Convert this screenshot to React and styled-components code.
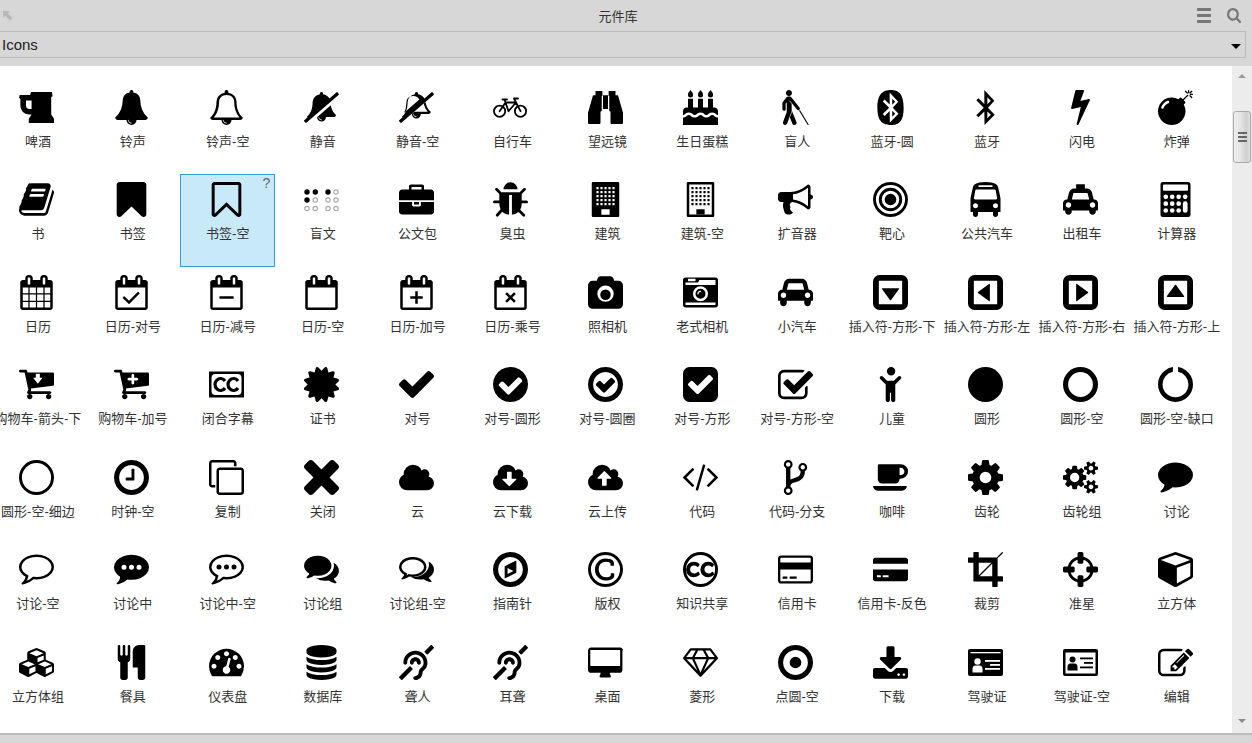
import React, { useLayoutEffect, useRef } from "react";
import styled, { createGlobalStyle } from "styled-components";
import { FaBlind, FaBluetooth, FaBluetoothB, FaDeaf } from "react-icons/fa";

const Global = createGlobalStyle`
  html, body { margin: 0; padding: 0; background: #d7d7d7; }
`;

const Page = styled.div`
  width: 1252px; height: 743px; overflow: hidden; background: #d7d7d7;
  display: flex; flex-direction: column;
  font-family: "Liberation Sans", "Noto Sans CJK SC", sans-serif; color: #333;
`;
const TitleBar = styled.div`
  height: 31px; display: flex; align-items: center; flex: none; padding: 0 11px 0 3px; box-sizing: border-box;
`;
const BackIcon = styled.svg`width: 10px; height: 10px; fill: #b8b8b8; flex: none;`;
const Title = styled.div`flex: 1; text-align: center; font-size: 13px; color: #333; padding-left: 42px;`;
const ToolIcon = styled.svg`width: 14px; height: 15px; fill: #777; margin-left: 16px; flex: none;`;
const SelectBar = styled.div`
  height: 27px; width: 1246px; box-sizing: border-box; flex: none;
  border: 1px solid #bbb; border-left: 0;
  display: flex; align-items: center; justify-content: space-between; padding: 0 4px 0 2px;
  font-size: 15px; color: #222;
`;
const Caret = styled.span`
  width: 0; height: 0; border-left: 5px solid transparent; border-right: 5px solid transparent;
  border-top: 5px solid #000; margin-top: 3px;
`;
const Main = styled.div`
  margin-top: 8px; height: 667px; flex: none; display: flex; background: #fff; overflow: hidden;
`;
const Scroller = styled.div`flex: 1; min-width: 0; overflow: hidden;`;
const Grid = styled.div`
  display: grid; grid-template-columns: repeat(13, 94.92px); grid-auto-rows: 92.6px;
  margin-left: -9.5px; padding-top: 15.5px;
`;
const Cell = styled.div`
  position: relative; display: flex; flex-direction: column; align-items: center; padding-top: 8px;
  box-sizing: border-box;
  background: ${p => (p.$selected ? "#c8e9f8" : "transparent")};
  box-shadow: ${p => (p.$selected ? "inset 0 0 0 1px #2f9fcb" : "none")};
`;
const IconBox = styled.div`
  width: 35px; height: 35px; margin-right: 3px; flex: none; display: flex;
  svg { width: 35px; height: 35px; display: block; fill: #000; }
`;
const Label = styled.div`
  margin-top: 8px; font-size: 13px; line-height: 17px; white-space: nowrap; color: #333; text-align: center;
`;
const Hint = styled.span`position: absolute; top: 0; right: 5px; font-size: 14px; line-height: 18px; color: #666;`;
const ScrollTrack = styled.div`
  width: 20px; flex: none; background: #ececec; box-sizing: border-box; padding: 8px 1px 10px;
  display: flex; flex-direction: column; align-items: center;
`;
const ArrowUp = styled.span`
  width: 0; height: 0; border-left: 4px solid transparent; border-right: 4px solid transparent; border-bottom: 4px solid #9a9a9a;
`;
const ArrowDown = styled.span`
  width: 0; height: 0; margin-top: auto; border-left: 4px solid transparent; border-right: 4px solid transparent; border-top: 4px solid #8c8c8c;
`;
const Thumb = styled.div`
  margin-top: 33px; width: 18px; height: 52px; box-sizing: border-box; border: 1px solid #a9a9a9; border-radius: 3px;
  background: linear-gradient(90deg, #eee, #e2e2e2 45%, #cfcfcf 80%, #e0e0e0);
  display: flex; flex-direction: column; justify-content: center; align-items: center; gap: 2px;
`;
const Grip = styled.span`width: 9px; height: 2px; background: #666;`;
const Footer = styled.div`flex: 1; border-top: 2px solid #bbb; background: #d7d7d7;`;

/* ---------- geometry helpers ---------- */
const disc = (cx, cy, r, cw = true) => {
  const s = cw ? 1 : 0;
  return `M${cx} ${cy - r}a${r} ${r} 0 1 ${s} 0 ${2 * r}a${r} ${r} 0 1 ${s} 0 ${-2 * r}z`;
};
const box = (x, y, w, h) => `M${x} ${y}h${w}v${h}h${-w}z`;
const boxCcw = (x, y, w, h) => `M${x} ${y}v${h}h${w}v${-h}z`;
const rbox = (x, y, w, h, r) =>
  `M${x + r} ${y}h${w - 2 * r}a${r} ${r} 0 0 1 ${r} ${r}v${h - 2 * r}a${r} ${r} 0 0 1 ${-r} ${r}h${-(w - 2 * r)}a${r} ${r} 0 0 1 ${-r} ${-r}v${-(h - 2 * r)}a${r} ${r} 0 0 1 ${r} ${-r}z`;

const windows = (draw) => {
  let d = "";
  for (let r = 0; r < 5; r++) for (let c = 0; c < 5; c++) d += draw(367 + c * 205, 256 + r * 205, 110, 110);
  return d;
};
const buildingD = rbox(128, 0, 1408, 1792, 64) + windows(boxCcw) + boxCcw(620, 1400, 424, 280);
const buildingOD = rbox(128, 0, 1408, 1792, 64) + boxCcw(256, 128, 1152, 1536);
const buildingOInner = windows(box) + box(620, 1390, 424, 280);

const calcD = (() => {
  let d = rbox(0, 0, 1536, 1792, 128) + rbox(128, 128, 1280, 320, 48);
  const rows = [760, 1110, 1460];
  const cols = [270, 600, 930];
  rows.forEach(y => cols.forEach(x => { d += disc(x, y, 120); }));
  d += disc(1265, 760, 120) + rbox(1145, 990, 240, 590, 120);
  return d;
})();

const calO = "M192 1664h1408v-1024h-1408v1024zm384-1216v-288q0-14-9-23t-23-9h-64q-14 0-23 9t-9 23v288q0 14 9 23t23 9h64q14 0 23-9t9-23zm768 0v-288q0-14-9-23t-23-9h-64q-14 0-23 9t-9 23v288q0 14 9 23t23 9h64q14 0 23-9t9-23zm384-64v1280q0 52-38 90t-90 38h-1408q-52 0-90-38t-38-90v-1280q0-52 38-90t90-38h128v-96q0-66 47-113t113-47h64q66 0 113 47t47 113v96h384v-96q0-66 47-113t113-47h64q66 0 113 47t47 113v96h128q52 0 90 38t38 90z";
const cal = "M192 1664h288v-288h-288v288zm352 0h320v-288h-320v288zm-352-352h288v-320h-288v320zm352 0h320v-320h-320v320zm-352-384h288v-288h-288v288zm736 736h320v-288h-320v288zm-384-736h320v-288h-320v288zm768 736h288v-288h-288v288zm-384-352h320v-320h-320v320zm-352-864v-288q0-13-9.500-22.500t-22.500-9.500h-64q-13 0-22.500 9.500t-9.500 22.500v288q0 13 9.500 22.500t22.500 9.500h64q13 0 22.500-9.500t9.500-22.500zm736 864h288v-320h-288v320zm-384-384h320v-288h-320v288zm384 0h288v-288h-288v288zm32-480v-288q0-13-9.500-22.500t-22.500-9.500h-64q-13 0-22.500 9.500t-9.500 22.500v288q0 13 9.500 22.500t22.500 9.500h64q13 0 22.500-9.500t9.500-22.500zm384-64v1280q0 52-38 90t-90 38h-1408q-52 0-90-38t-38-90v-1280q0-52 38-90t90-38h128v-96q0-66 47-113t113-47h64q66 0 113 47t47 113v96h384v-96q0-66 47-113t113-47h64q66 0 113 47t47 113v96h128q52 0 90 38t38 90z";

const caretFrame = rbox(0, 0, 1536, 1536, 288) + boxCcw(256, 256, 1024, 1024);
const caretTri = "M416 576h704q48 0 24 40l-352 480q-24 32-48 0l-352-480q-24-40 24-40z";

const cartBody = "M704 1536q0 53-37.500 90.500t-90.500 37.500-90.500-37.500-37.500-90.500 37.500-90.500 90.500-37.500 90.500 37.500 37.500 90.500zm896 0q0 53-37.500 90.500t-90.500 37.500-90.500-37.500-37.500-90.500 37.500-90.500 90.500-37.500 90.500 37.500 37.500 90.500zm128-1088v512q0 24-16 42.500t-41 21.500l-1044 122q1 7 4.500 21.500t6 26.500 2.500 22q0 16-24 64h920q26 0 45 19t19 45-19 45-45 19h-1024q-26 0-45-19t-19-45q0-14 11-39.500t29.500-59.500 20.500-38l-177-823h-204q-26 0-45-19t-19-45 19-45 45-19h256q16 0 28.500 6.500t20 15.500 13 24.500 7.500 26.500 5.500 29.500 4.500 25.500h1201q26 0 45 19t19 45z";

const commentO = "M896 384q-204 0-381.500 69.500t-282 187.500-104.500 255q0 112 71.500 213.500t201.500 175.500l87 50-27 96q-24 91-70 172 152-63 275-171l43-38 57 6q69 8 130 8 204 0 381.500-69.500t282-187.500 104.500-255-104.500-255-282-187.500-381.500-69.500zm896 512q0 174-120 321.500t-326 233-450 85.500q-70 0-145-8-198 175-460 242-49 14-114 22h-5q-15 0-27-10.500t-16-27.500v-1q-3-4-.5-12t2-10 4.500-9.500l6-9 7-8.500 8-9q7-8 31-34.500t34.500-38 31-39.500 32.500-51 27-59 26-76q-157-89-247.500-220t-90.500-281q0-174 120-321.500t326-233 450-85.500 450 85.500 326 233 120 321.500z";
const threeDots = disc(512, 896, 128) + disc(896, 896, 128) + disc(1280, 896, 128);
const ringCut = "M1312 896q0-148-73-273t-198-198-273-73-273 73-198 198-73 273 73 273 198 198 273 73 273-73 198-198 73-273zm224 0q0 209-103 385.500t-279.500 279.500-385.500 103-385.500-103-279.500-279.500-103-385.500 103-385.500 279.500-279.500 385.500-103 385.500 103 279.500 279.500 103 385.500z";

const path = (...ds) => ds.map((d, i) => <path key={i} d={d} />);

const idCardSolid = (
  <>
    <rect x="0" y="4" width="35" height="27" rx="2" fill="#000" />
    <rect x="2.500" y="7" width="30" height="1.300" fill="#fff" />
    <circle cx="9.500" cy="16.500" r="3.200" fill="#fff" />
    <path d="M4.500 27.500v-3.500q0-3.500 3-3.500h4q3 0 3 3.500v3.500z" fill="#fff" />
    <rect x="17" y="15" width="15" height="1.800" fill="#fff" />
    <rect x="22" y="19" width="10" height="1.800" fill="#fff" />
    <rect x="17" y="23" width="15" height="1.800" fill="#fff" />
  </>
);
const idCardLine = (
  <>
    <rect x="0" y="4" width="35" height="27" rx="2" fill="#000" />
    <rect x="2.500" y="7.500" width="30" height="21" fill="#fff" />
    <circle cx="9.500" cy="14.500" r="3" fill="#000" />
    <path d="M4.500 25.500v-3.500q0-3.500 3-3.500h4q3 0 3 3.500v3.500z" fill="#000" />
    <rect x="17" y="12.500" width="13" height="1.800" fill="#000" />
    <rect x="21" y="17" width="9" height="1.800" fill="#000" />
    <rect x="17" y="21.500" width="13" height="1.800" fill="#000" />
  </>
);
const brailleOn = [[3, 10], [11.3, 10], [24, 10], [3, 18]];
const brailleOff = [[32, 10], [11.3, 18], [24, 18], [32, 18], [3, 26.5], [11.3, 26.5], [24, 26.5], [32, 26.5]];
const braille = (
  <>
    {brailleOn.map(([x, y], i) => <circle key={i} cx={x} cy={y} r="2.700" fill="#000" />)}
    {brailleOff.map(([x, y], i) => <circle key={i} cx={x} cy={y} r="2.200" fill="none" stroke="#aaa" strokeWidth="1.200" />)}
  </>
);
const bike = (
  <g fill="none" stroke="#000" strokeWidth="1.800" strokeLinejoin="round" strokeLinecap="round">
    <circle cx="6.600" cy="21.200" r="5.600" />
    <circle cx="27.500" cy="21.200" r="5.600" />
    <path d="M6.600 21.200L12.500 12.500L23 12.500L27.500 21.200M15.500 21.200L11.500 9.500M15.500 21.200L23 12.500M9.500 9.500h4.500M23 12.500L21 8.500h4" />
  </g>
);
const closedCaption = (
  <>
    <rect x="0" y="4.500" width="35" height="26" fill="#000" />
    <rect x="2.500" y="7" width="30" height="21" rx="4" fill="#fff" />
    <g fill="none" stroke="#000" strokeWidth="3.200">
      <path d="M16 14a5.500 6 0 1 0 0 7" />
      <path d="M29 14a5.500 6 0 1 0 0 7" />
    </g>
  </>
);

const ROWS = [
  [
    { label: "啤酒", d: ["M640 832v-384h-256v256q0 53 37.500 90.500t90.500 37.500h128zm1024 448v192h-1152v-192l128-192h-128q-159 0-271.500-112.500t-112.500-271.500v-320l-64-64 32-128h480l32-128h960l32 192-64 32v800z"] },
    { label: "铃声", d: ["M912 1696q0-16-16-16-59 0-101.500-42.500t-42.500-101.500q0-16-16-16t-16 16q0 73 51.500 124.500t124.500 51.500q16 0 16-16zm816-288q0 52-38 90t-90 38h-448q0 106-75 181t-181 75-181-75-75-181h-448q-52 0-90-38t-38-90q190-161 287-397.500t97-498.500q0-165 96-262t264-117q-8-18-8-37 0-40 28-68t68-28 68 28 28 68q0 19-8 37 168 20 264 117t96 262q0 262 97 498.500t287 397.500z"] },
    { label: "铃声-空", d: ["M912 1696q0-16-16-16-59 0-101.500-42.500t-42.500-101.500q0-16-16-16t-16 16q0 73 51.500 124.500t124.500 51.500q16 0 16-16zm-678-288h1324q-271-305-271-832 0-51-24-105t-69-103-121.500-80.500-169.500-31.500-169.500 31.500-121.500 80.500-69 103-24 105q0 527-271 832zm1494 0q0 52-38 90t-90 38h-448q0 106-75 181t-181 75-181-75-75-181h-448q-52 0-90-38t-38-90q50-42 91-88t85-119.500 74.500-158.500 50-206 19.500-260q0-152 117-282.500t307-158.500q-8-19-8-39 0-40 28-68t68-28 68 28 28 68q0 20-8 39 190 28 307 158.500t117 282.500q0 139 19.500 260t50 206 74.500 158.500 85 119.500 91 88z"] },
    { label: "静音", d: ["M1558 852q61 356 298 556 0 52-38 90t-90 38h-448q0 106-75 181t-181 75-180.500-74.500-75.500-180.500zm-534 860q16 0 16-16t-16-16q-59 0-101.500-42.500t-42.500-101.500q0-16-16-16t-16 16q0 73 51.500 124.500t124.500 51.500zm1001-1512q8 10 7.500 23.500t-10.500 22.500l-1872 1622q-10 8-23.500 7t-21.500-11l-84-96q-8-10-7.500-23.500t10.500-21.500l186-161q-19-32-19-66 50-42 91-88t85-119.500 74.500-158.500 50-206 19.500-260q0-152 117-282.500t307-158.500q-8-19-8-39 0-40 28-68t68-28 68 28 28 68q0 20-8 39 124 18 219 82.500t148 157.500l418-363q10-8 23.500-7t21.500 11z"] },
    { label: "静音-空", d: ["M1032 1696q0-16-16-16-59 0-101.500-42.500t-42.500-101.500q0-16-16-16t-16 16q0 73 51.500 124.500t124.500 51.500q16 0 16-16zm-721-229l877-760q-42-88-132.500-146.500t-223.500-58.500q-93 0-169.500 31.500t-121.500 80.500-69 103-24 105q0 384-137 645zm1537-59q0 52-38 90t-90 38h-448q0 106-75 181t-181 75-180.500-74.500-75.500-180.500l149-129h757q-166-187-227-459l111-97q61 356 298 556zm94-1124l84 96q8 10 7.500 23.500t-10.500 22.500l-1872 1622q-10 8-23.500 7t-21.500-11l-84-96q-8-10-7.500-23.500t10.500-21.500l186-161q-19-32-19-66 50-42 91-88t85-119.500 74.500-158.500 50-206 19.500-260q0-152 117-282.500t307-158.500q-8-19-8-39 0-40 28-68t68-28 68 28 28 68q0 20-8 39 124 18 219 82.500t148 157.500l418-363q10-8 23.500-7t21.500 11z"] },
    { label: "自行车", fixed: bike },
    { label: "望远镜", d: ["M704 320v768q0 26-19 45t-45 19v576q0 26-19 45t-45 19h-512q-26 0-45-19t-19-45v-512l249-873q7-23 31-23h424zm320 0v704h-256v-704h256zm768 896v512q0 26-19 45t-45 19h-512q-26 0-45-19t-19-45v-576q-26 0-45-19t-19-45v-768h424q24 0 31 23zm-1056-1088v224h-352v-224q0-14 9-23t23-9h288q14 0 23 9t9 23zm672 0v224h-352v-224q0-14 9-23t23-9h288q14 0 23 9t9 23z"] },
    { label: "生日蛋糕", d: ["M1792 1408v384h-1792v-384q45 0 85-14t59-27.500 47-37.500q30-27 51.500-38t56.500-11q24 0 44 7t31 15 33 27q29 25 47 38t58 27 86 14q45 0 85-14.500t58-27 48-37.500q21-19 32.500-27t31-15 43.500-7q35 0 56.500 11t51.500 38q28 24 47 37.500t59 27.500 85 14 85-14 59-27.500 47-37.500q30-27 51.500-38t56.500-11q34 0 55.500 11t51.500 38q29 25 47 38t58 27 86 14zm0-320v192q-24 0-44-7t-31-15-33-27q-29-25-47-38t-58-27-85-14q-46 0-86 14t-58 27-47 38q-22 19-33 27t-31 15-44 7q-35 0-56.500-11t-51.500-38q-29-25-47-38t-58-27-86-14q-45 0-85 14.500t-58 27-48 37.500q-21 19-32.500 27t-31 15-43.500 7q-35 0-56.500-11t-51.500-38q-28-24-47-37.500t-59-27.500-85-14q-46 0-86 14t-58 27-47 38q-30 27-51.500 38t-56.500 11v-192q0-80 56-136t136-56h64v-448h256v448h256v-448h256v448h256v-448h256v448h64q80 0 136 56t56 136z", "M384 0q128 128 128 256t-128 128-128-128 128-256z", "M896 0q128 128 128 256t-128 128-128-128 128-256z", "M1408 0q128 128 128 256t-128 128-128-128 128-256z"] },
    { label: "盲人", Comp: FaBlind },
    { label: "蓝牙-圆", Comp: FaBluetooth },
    { label: "蓝牙", Comp: FaBluetoothB },
    { label: "闪电", d: ["M1333 566q18 20 7 44l-540 1157q-13 25-42 25-4 0-14-2-17-5-25.500-19t-4.500-30l197-808-406 101q-4 1-12 1-18 0-31-11-18-15-13-39l201-825q4-14 16-23t28-9h328q19 0 32 12.500t13 29.500q0 8-5 18l-171 463 396-98q8-2 12-2 19 0 34 15z"] },
    { label: "炸弹", d: ["M571 589q-10-25-34-35t-49 0q-108 44-191 127t-127 191q-10 25 0 49t35 34q13 5 24 5 42 0 60-40 34-84 98.500-148.500t148.500-98.500q25-11 35-35t0-49zm942-356l46 46-244 243 68 68q19 19 19 45.500t-19 45.500l-64 64q89 161 89 343 0 143-55.500 273.500t-150 225-225 150-273.500 55.500-273.500-55.500-225-150-150-225-55.500-273.500 55.500-273.500 150-225 225-150 273.500-55.500q182 0 343 89l64-64q19-19 45.500-19t45.500 19l68 68zm8-56q-10 10-22 10-13 0-23-10l-91-90q-9-10-9-23t9-23q10-9 23-9t23 9l90 91q10 9 10 22.500t-10 22.500zm230 230q-11 9-23 9t-23-9l-90-91q-10-9-10-22.500t10-22.500q9-10 22.500-10t22.500 10l91 90q9 10 9 23t-9 23zm41-183q0 14-9 23t-23 9h-96q-14 0-23-9t-9-23 9-23 23-9h96q14 0 23 9t9 23zm-192-192v96q0 14-9 23t-23 9-23-9-9-23v-96q0-14 9-23t23-9 23 9 9 23zm151 55l-91 90q-10 10-22 10-13 0-23-10-10-9-10-22.500t10-22.500l90-91q10-9 23-9t23 9q9 10 9 23t-9 23z"] },
  ],
  [
    { label: "书", d: ["M1703 478q40 57 18 129l-275 906q-19 64-76.500 107.500t-122.500 43.500h-923q-77 0-148.500-53.500t-99.500-131.500q-24-67-2-127 0-4 3-27t4-37q1-8-3-21.500t-3-19.500q2-11 8-21t16.500-23.500 16.500-23.500q23-38 45-91.500t30-91.500q3-10 .5-30t-.5-28q3-11 17-28t17-23q21-36 42-92t25-90q1-9-2.500-32t.5-28q4-13 22-30.500t22-22.500q19-26 42.500-84.500t27.500-96.500q1-8-3-25.500t-2-26.500q2-8 9-18t18-23 17-21q8-12 16.500-30.500t15-35 16-36 19.500-32 26.500-23.500 36-11.500 47.500 5.500l-1 3q38-9 51-9h761q74 0 114 56t18 130l-274 906q-36 119-71.500 153.500t-128.500 34.500h-869q-27 0-38 15-11 16-1 43 24 70 144 70h923q29 0 56-15.500t35-41.500l300-987q7-22 5-57 38 15 59 43zm-1064 2q-4 13 2 22.500t20 9.500h608q13 0 25.500-9.500t16.500-22.500l21-64q4-13-2-22.500t-20-9.500h-608q-13 0-25.500 9.500t-16.500 22.500zm-83 256q-4 13 2 22.500t20 9.500h608q13 0 25.500-9.500t16.500-22.500l21-64q4-13-2-22.500t-20-9.500h-608q-13 0-25.500 9.500t-16.500 22.500z"] },
    { label: "书签", d: ["M1420 128q23 0 44 9 33 13 52.500 41t19.500 62v1289q0 34-19.500 62t-52.500 41q-19 8-44 8-48 0-83-32l-441-424-441 424q-36 33-83 33-23 0-44-9-33-13-52.500-41t-19.500-62v-1289q0-34 19.500-62t52.500-41q21-9 44-9h1048z"] },
    { label: "书签-空", selected: true, d: ["M1408 256h-1024v1241l423-406 89-85 89 85 423 406v-1241zm12-128q23 0 44 9 33 13 52.500 41t19.500 62v1289q0 34-19.500 62t-52.500 41q-19 8-44 8-48 0-83-32l-441-424-441 424q-36 33-83 33-23 0-44-9-33-13-52.500-41t-19.500-62v-1289q0-34 19.500-62t52.500-41q21-9 44-9h1048z"] },
    { label: "盲文", fixed: braille },
    { label: "公文包", d: ["M640 256h512v-128h-512v128zm1152 640v480q0 66-47 113t-113 47h-1472q-66 0-113-47t-47-113v-480h672v160q0 26 19 45t45 19h320q26 0 45-19t19-45v-160h672zm-768 0v128h-256v-128h256zm768-480v384h-1792v-384q0-66 47-113t113-47h352v-160q0-40 28-68t68-28h576q40 0 68 28t28 68v160h352q66 0 113 47t47 113z"] },
    { label: "臭虫", d: ["M1696 960q0 26-19 45t-45 19h-224q0 171-67 290l208 209q19 19 19 45t-19 45q-18 19-45 19t-45-19l-198-197q-5 5-15 13t-42 28.500-65 36.500-82 29-97 13v-896h-128v896q-51 0-101.500-13.500t-87-33-66-39-43.500-32.500l-15-14-183 207q-20 21-48 21-24 0-43-16-19-18-20.500-44.500t15.500-46.500l202-227q-58-114-58-274h-224q-26 0-45-19t-19-45 19-45 45-19h224v-294l-173-173q-19-19-19-45t19-45 45-19 45 19l173 173h844l173-173q19-19 45-19t45 19 19 45-19 45l-173 173v294h224q26 0 45 19t19 45zm-480-576h-640q0-133 93.500-226.500t226.500-93.500 226.500 93.500 93.500 226.500z"] },
    { label: "建筑", d: [buildingD] },
    { label: "建筑-空", d: [buildingOD, buildingOInner] },
    { label: "扩音器", d: ["M1664 640q53 0 90.500 37.500t37.500 90.500-37.500 90.500-90.500 37.500v384q0 52-38 90t-90 38q-417-347-812-380-58 19-91 66t-31 100.500 40 92.500q-20 33-23 65.500t6 58 33.500 55 48 50 61.500 50.500q-29 58-111.500 83t-168.500 11.500-132-55.500q-7-23-29.500-87.500t-32-94.500-23-89-15-101 3.500-98.500 22-110.500h-122q-66 0-113-47t-47-113v-192q0-66 47-113t113-47h480q435 0 896-384 52 0 90 38t38 90v384zm-128 604v-954q-394 302-768 343v270q377 42 768 341z"] },
    { label: "靶心", d: ["M1152 896q0 106-75 181t-181 75-181-75-75-181 75-181 181-75 181 75 75 181zm128 0q0-159-112.500-271.500t-271.500-112.500-271.500 112.500-112.500 271.500 112.500 271.500 271.500 112.500 271.500-112.500 112.500-271.500zm128 0q0 212-150 362t-362 150-362-150-150-362 150-362 362-150 362 150 150 362zm128 0q0-130-51-248.500t-136.500-204-204-136.500-248.500-51-248.500 51-204 136.500-136.500 204-51 248.500 51 248.500 136.500 204 204 136.500 248.500 51 248.500-51 204-136.500 136.500-204 51-248.500zm128 0q0 209-103 385.500t-279.500 279.500-385.500 103-385.500-103-279.500-279.500-103-385.500 103-385.500 279.500-279.500 385.500-103 385.500 103 279.500 279.500 103 385.500z"] },
    { label: "公共汽车", d: ["M512 1216q0-53-37.500-90.500t-90.500-37.500-90.500 37.500-37.500 90.500 37.500 90.500 90.500 37.500 90.500-37.500 37.500-90.500zm1024 0q0-53-37.500-90.500t-90.500-37.500-90.500 37.500-37.500 90.500 37.500 90.500 90.500 37.500 90.500-37.500 37.500-90.500zm-46-396l-72-384q-5-23-22.500-37.500t-40.500-14.500h-918q-23 0-40.500 14.500t-22.500 37.500l-72 384q-5 30 14 53t49 23h1062q30 0 49-23t14-53zm-226-612q0-20-14-34t-34-14h-640q-20 0-34 14t-14 34 14 34 34 14h640q20 0 34-14t14-34zm400 725v603h-128v128q0 53-37.500 90.500t-90.500 37.500-90.500-37.500-37.500-90.500v-128h-768v128q0 53-37.500 90.500t-90.500 37.500-90.500-37.500-37.500-90.500v-128h-128v-603q0-112 25-223l103-454q9-78 97.500-137t230-89 312.500-30 312.500 30 230 89 97.500 137l105 454q23 102 23 223z"] },
    { label: "出租车", d: ["M1824 896q93 0 158.500 65.500t65.500 158.500v384q0 14-9 23t-23 9h-96v64q0 80-56 136t-136 56-136-56-56-136v-64h-1024v64q0 80-56 136t-136 56-136-56-56-136v-64h-96q-14 0-23-9t-9-23v-384q0-93 65.500-158.500t158.500-65.500h28l105-419q23-94 104-157.500t179-63.500h128v-224q0-14 9-23t23-9h448q14 0 23 9t9 23v224h128q98 0 179 63.500t104 157.500l105 419h28zm-1504 480q66 0 113-47t47-113-47-113-113-47-113 47-47 113 47 113 113 47zm196-480h1016l-89-357q-2-8-14-17.500t-21-9.500h-768q-9 0-21 9.500t-14 17.500zm1212 480q66 0 113-47t47-113-47-113-113-47-113 47-47 113 47 113 113 47z"] },
    { label: "计算器", d: [calcD], evenodd: true },
  ],
  [
    { label: "日历", d: [cal] },
    { label: "日历-对号", d: [calO, "M1303 964l-512 512q-10 9-23 9t-23-9l-288-288q-9-10-9-23t9-22l46-46q9-9 22.500-9t22.500 9l220 220 444-444q10-9 23-9t22 9l46 46q9 9 9 22t-9 23z"] },
    { label: "日历-减号", d: [calO, "M560 1088h672q32 0 32 32v64q0 32-32 32h-672q-32 0-32-32v-64q0-32 32-32z"] },
    { label: "日历-空", d: [calO] },
    { label: "日历-加号", d: [calO, "M832 832h128v256h256v128h-256v256h-128v-256h-256v-128h256z"] },
    { label: "日历-乘号", d: [calO, "M896 1060l180-180 92 92-180 180 180 180-92 92-180-180-180 180-92-92 180-180-180-180 92-92z"] },
    { label: "照相机", d: ["M928 736q119 0 203.500 84.500t84.500 203.500-84.500 203.500-203.500 84.500-203.500-84.500-84.500-203.500 84.500-203.500 203.500-84.500zm704-480q106 0 181 75t75 181v1024q0 106-75 181t-181 75h-1408q-106 0-181-75t-75-181v-1024q0-106 75-181t181-75h224l51-136q19-49 69.500-84.500t103.500-35.500h512q53 0 103.500 35.500t69.500 84.500l51 136h224zm-704 1152q185 0 316.500-131.500t131.500-316.500-131.500-316.500-316.500-131.500-316.500 131.500-131.500 316.500 131.500 316.500 316.500 131.500z"] },
    { label: "老式相机", d: ["M928 832q0-14-9-23t-23-9q-66 0-113 47t-47 113q0 14 9 23t23 9 23-9 9-23q0-40 28-68t68-28q14 0 23-9t9-23zm224 130q0 106-75 181t-181 75-181-75-75-181 75-181 181-75 181 75 75 181zm-1024 574h1536v-128h-1536v128zm1152-574q0-159-112.500-271.500t-271.500-112.500-271.500 112.500-112.500 271.500 112.500 271.500 271.500 112.500 271.500-112.500 112.500-271.500zm-1024-642h384v-128h-384v128zm-128 192h1536v-256h-828l-64 128h-644v128zm1664-256v1280q0 53-37.500 90.500t-90.500 37.500h-1536q-53 0-90.500-37.500t-37.500-90.500v-1280q0-53 37.500-90.500t90.500-37.500h1536q53 0 90.500 37.500t37.500 90.500z"] },
    { label: "小汽车", d: ["M480 1088q0-66-47-113t-113-47-113 47-47 113 47 113 113 47 113-47 47-113zm36-320h1016l-89-357q-2-8-14-17.500t-21-9.500h-768q-9 0-21 9.500t-14 17.500zm1372 320q0-66-47-113t-113-47-113 47-47 113 47 113 113 47 113-47 47-113zm160-96v384q0 14-9 23t-23 9h-96v128q0 80-56 136t-136 56-136-56-56-136v-128h-1024v128q0 80-56 136t-136 56-136-56-56-136v-128h-96q-14 0-23-9t-9-23v-384q0-93 65.500-158.500t158.500-65.500h28l105-419q23-94 104-157.500t179-63.500h768q98 0 179 63.500t104 157.500l105 419h28q93 0 158.500 65.500t65.500 158.500z"] },
    { label: "插入符-方形-下", caret: 0 },
    { label: "插入符-方形-左", caret: 90 },
    { label: "插入符-方形-右", caret: -90 },
    { label: "插入符-方形-上", caret: 180 },
  ],
  [
    { label: "购物车-箭头-下", d: ["M864 448v192h-128l224 288 224-288h-128v-192z" + cartBody] },
    { label: "购物车-加号", d: ["M1216 704q0-26-19-45t-45-19h-128v-128q0-26-19-45t-45-19-45 19-19 45v128h-128q-26 0-45 19t-19 45 19 45 45 19h128v128q0 26 19 45t45 19 45-19 19-45v-128h128q26 0 45-19t19-45z" + cartBody] },
    { label: "闭合字幕", fixed: closedCaption },
    { label: "证书", d: ["M1504 896l138 135q30 28 20 70-12 41-52 51l-188 48 53 186q12 41-19 70-29 31-70 19l-186-53-48 188q-10 40-51 52-12 2-19 2-31 0-51-22l-135-138-135 138q-28 30-70 20-41-11-51-52l-48-188-186 53q-41 12-70-19-31-29-19-70l53-186-188-48q-40-10-52-51-10-42 20-70l138-135-138-135q-30-28-20-70 12-41 52-51l188-48-53-186q-12-41 19-70 29-31 70-19l186 53 48-188q10-41 51-51 41-12 70 19l135 139 135-139q29-30 70-19 41 10 51 51l48 188 186-53q41-12 70 19 31 29 19 70l-53 186 188 48q40 10 52 51 10 42-20 70z"] },
    { label: "对号", d: ["M1671 566q0 40-28 68l-724 724-136 136q-28 28-68 28t-68-28l-136-136-362-362q-28-28-28-68t28-68l136-136q28-28 68-28t68 28l294 295 656-657q28-28 68-28t68 28l136 136q28 28 28 68z"] },
    { label: "对号-圆形", d: ["M1412 734q0-28-18-46l-91-90q-19-19-45-19t-45 19l-408 407-226-226q-19-19-45-19t-45 19l-91 90q-18 18-18 46 0 27 18 45l362 362q19 19 45 19 27 0 46-19l543-543q18-18 18-45zm252 162q0 209-103 385.500t-279.500 279.500-385.500 103-385.500-103-279.500-279.500-103-385.500 103-385.500 279.500-279.500 385.500-103 385.500 103 279.500 279.500 103 385.500z"] },
    { label: "对号-圆圈", d: ["M1299 813l-422 422q-19 19-45 19t-45-19l-294-294q-19-19-19-45t19-45l102-102q19-19 45-19t45 19l147 147 275-275q19-19 45-19t45 19l102 102q19 19 19 45t-19 45zm141 83q0-148-73-273t-198-198-273-73-273 73-198 198-73 273 73 273 198 198 273 73 273-73 198-198 73-273zm224 0q0 209-103 385.500t-279.500 279.500-385.500 103-385.500-103-279.500-279.500-103-385.500 103-385.500 279.500-279.500 385.500-103 385.500 103 279.500 279.500 103 385.500z"] },
    { label: "对号-方形", d: ["M813 1299l614-614q19-19 19-45t-19-45l-102-102q-19-19-45-19t-45 19l-467 467-211-211q-19-19-45-19t-45 19l-102 102q-19 19-19 45t19 45l358 358q19 19 45 19t45-19zm851-883v960q0 119-84.500 203.500t-203.500 84.500h-960q-119 0-203.500-84.500t-84.500-203.500v-960q0-119 84.500-203.500t203.500-84.500h960q119 0 203.500 84.500t84.500 203.500z"] },
    { label: "对号-方形-空", d: ["M1472 930v318q0 119-84.500 203.500t-203.500 84.500h-832q-119 0-203.500-84.500t-84.500-203.500v-832q0-119 84.500-203.500t203.500-84.500h832q63 0 117 25 15 7 18 23 3 17-9 29l-49 49q-10 10-23 10-3 0-9-2-23-6-45-6h-832q-66 0-113 47t-47 113v832q0 66 47 113t113 47h832q66 0 113-47t47-113v-254q0-13 9-22l64-64q10-10 23-10 6 0 12 3 20 8 20 29zm231-489l-814 814q-24 24-57 24t-57-24l-430-430q-24-24-24-57t24-57l110-110q24-24 57-24t57 24l263 263 647-647q24-24 57-24t57 24l110 110q24 24 24 57t-24 57z"] },
    { label: "儿童", d: ["M1188 548l-292 292v824q0 46-33 79t-79 33-79-33-33-79v-384h-64v384q0 46-33 79t-79 33-79-33-33-79v-824l-292-292q-28-28-28-68t28-68q29-28 68.500-28t67.500 28l228 228h368l228-228q28-28 68-28t68 28q28 29 28 68.500t-28 67.500zm-292-420q0 93-65.500 158.500t-158.500 65.500-158.500-65.500-65.500-158.500 65.500-158.500 158.500-65.500 158.500 65.500 65.500 158.500z"] },
    { label: "圆形", d: [disc(768, 768, 768)] },
    { label: "圆形-空", d: [disc(768, 768, 768) + disc(768, 768, 544, false)] },
    { label: "圆形-空-缺口", d: ["M1760 896q0 176-68.500 336t-184 275.500-275.500 184-336 68.500-336-68.500-275.500-184-184-275.500-68.500-336q0-213 97-398.500t265-305.500 374-151v228q-221 45-366.500 221t-145.500 406q0 130 51 248.500t136.500 204 204 136.500 248.500 51 248.500-51 204-136.500 136.500-204 51-248.500q0-230-145.500-406t-366.500-221v-228q206 31 374 151t265 305.500 97 398.500z"] },
  ],
  [
    { label: "圆形-空-细边", d: [disc(768, 768, 768) + disc(768, 768, 640, false)] },
    { label: "时钟-空", d: ["M1024 544v448q0 14-9 23t-23 9h-320q-14 0-23-9t-9-23v-64q0-14 9-23t23-9h224v-352q0-14 9-23t23-9h64q14 0 23 9t9 23zm416 352q0-148-73-273t-198-198-273-73-273 73-198 198-73 273 73 273 198 198 273 73 273-73 198-198 73-273zm224 0q0 209-103 385.500t-279.500 279.500-385.500 103-385.500-103-279.500-279.500-103-385.500 103-385.500 279.500-279.500 385.500-103 385.500 103 279.500 279.500 103 385.500z"] },
    { label: "复制", d: ["M1664 1632v-1088q0-13-9.500-22.500t-22.500-9.500h-1088q-13 0-22.500 9.500t-9.500 22.500v1088q0 13 9.500 22.500t22.500 9.500h1088q13 0 22.500-9.500t9.500-22.500zm128-1088v1088q0 66-47 113t-113 47h-1088q-66 0-113-47t-47-113v-1088q0-66 47-113t113-47h1088q66 0 113 47t47 113zm-384-384v160h-128v-160q0-13-9.500-22.500t-22.500-9.500h-1088q-13 0-22.500 9.500t-9.500 22.500v1088q0 13 9.500 22.500t22.500 9.500h160v128h-160q-66 0-113-47t-47-113v-1088q0-66 47-113t113-47h1088q66 0 113 47t47 113z"] },
    { label: "关闭", d: ["M1490 1322q0 40-28 68l-136 136q-28 28-68 28t-68-28l-294-294-294 294q-28 28-68 28t-68-28l-136-136q-28-28-28-68t28-68l294-294-294-294q-28-28-28-68t28-68l136-136q28-28 68-28t68 28l294 294 294-294q28-28 68-28t68 28l136 136q28 28 28 68t-28 68l-294 294 294 294q28 28 28 68z"] },
    { label: "云", d: ["M1984 1152q0 159-112.500 271.500t-271.500 112.500h-1088q-185 0-316.500-131.500t-131.500-316.500q0-132 71-241.500t187-163.500q-2-28-2-43 0-212 150-362t362-150q158 0 286.500 88t187.500 230q70-62 166-62 106 0 181 75t75 181q0 75-41 138 129 30 213 134.500t84 239.500z"] },
    { label: "云下载", d: ["M1280 928q0-14-9-23t-23-9h-224v-352q0-13-9.500-22.500t-22.500-9.500h-192q-13 0-22.500 9.500t-9.500 22.500v352h-224q-13 0-22.500 9.500t-9.500 22.500q0 14 9 23l352 352q9 9 23 9t23-9l351-351q10-12 10-24zm640 224q0 159-112.500 271.500t-271.500 112.500h-1088q-185 0-316.500-131.500t-131.500-316.500q0-130 70-240t188-165q-2-30-2-43 0-212 150-362t362-150q156 0 285.500 87t188.500 231q71-62 166-62 106 0 181 75t75 181q0 76-41 138 130 31 213.500 135.500t83.500 238.500z"] },
    { label: "云上传", d: ["M1280 864q0-14-9-23l-352-352q-9-9-23-9t-23 9l-351 351q-10 12-10 24 0 14 9 23t23 9h224v352q0 13 9.500 22.500t22.500 9.500h192q13 0 22.500-9.500t9.500-22.500v-352h224q13 0 22.500-9.500t9.500-22.500zm640 288q0 159-112.500 271.500t-271.500 112.500h-1088q-185 0-316.500-131.500t-131.500-316.500q0-130 70-240t188-165q-2-30-2-43 0-212 150-362t362-150q156 0 285.500 87t188.500 231q71-62 166-62 106 0 181 75t75 181q0 76-41 138 130 31 213.500 135.500t83.500 238.500z"] },
    { label: "代码", d: ["M617 1399l-50 50q-10 10-23 10t-23-10l-466-466q-10-10-10-23t10-23l466-466q10-10 23-10t23 10l50 50q10 10 10 23t-10 23l-393 393 393 393q10 10 10 23t-10 23zm591-1067l-373 1291q-4 13-15.500 19.500t-23.500 2.500l-62-17q-13-4-19.500-15.500t-2.500-24.500l373-1291q4-13 15.500-19.500t23.500-2.500l62 17q13 4 19.500 15.500t2.500 24.500zm657 651l-466 466q-10 10-23 10t-23-10l-50-50q-10-10-10-23t10-23l393-393-393-393q-10-10-10-23t10-23l50-50q10-10 23-10t23 10l466 466q10 10 10 23t-10 23z"] },
    { label: "代码-分支", d: ["M288 1472q0-40-28-68t-68-28-68 28-28 68 28 68 68 28 68-28 28-68zm0-1152q0-40-28-68t-68-28-68 28-28 68 28 68 68 28 68-28 28-68zm640 128q0-40-28-68t-68-28-68 28-28 68 28 68 68 28 68-28 28-68zm96 0q0 52-26 96.500t-70 69.500q-2 287-226 414-67 38-203 81-128 40-169.500 71t-41.500 100v26q44 25 70 69.500t26 96.500q0 80-56 136t-136 56-136-56-56-136q0-52 26-96.500t70-69.500v-820q-44-25-70-69.500t-26-96.500q0-80 56-136t136-56 136 56 56 136q0 52-26 96.500t-70 69.500v497q54-26 154-57 55-17 87.500-29.500t70.500-31 59-39.500 40.500-51 28-69.500 8.500-91.500q-44-25-70-69.500t-26-96.500q0-80 56-136t136-56 136 56 56 136z"] },
    { label: "咖啡", d: ["M1664 640q0-80-56-136t-136-56h-64v384h64q80 0 136-56t56-136zm-1664 768h1792q0 106-75 181t-181 75h-1280q-106 0-181-75t-75-181zm1856-768q0 159-112.500 271.500t-271.500 112.500h-64v32q0 92-66 158t-158 66h-704q-92 0-158-66t-66-158v-736q0-26 19-45t45-19h1152q159 0 271.500 112.500t112.500 271.500z"] },
    { label: "齿轮", d: ["M1152 896q0-106-75-181t-181-75-181 75-75 181 75 181 181 75 181-75 75-181zm512-109v222q0 12-8 23t-20 13l-185 28q-19 54-39 91 35 50 107 138 10 12 10 25t-9 23q-27 37-99 108t-94 71q-12 0-26-9l-138-108q-44 23-91 38-16 136-29 186-7 28-36 28h-222q-14 0-24.500-8.500t-11.500-21.500l-28-184q-49-16-90-37l-141 107q-10 9-25 9-14 0-25-11-126-114-165-168-7-10-7-23 0-12 8-23 15-21 51-66.500t54-70.500q-27-50-41-99l-183-27q-13-2-21-12.500t-8-23.500v-222q0-12 8-23t19-13l186-28q14-46 39-92-40-57-107-138-10-12-10-24 0-10 9-23 26-36 98.500-107.500t94.500-71.500q13 0 26 10l138 107q44-23 91-38 16-136 29-186 7-28 36-28h222q14 0 24.500 8.500t11.500 21.500l28 184q49 16 90 37l142-107q9-9 24-9 13 0 25 10 129 119 165 170 7 8 7 22 0 12-8 23-15 21-51 66.500t-54 70.500q26 50 41 98l183 28q13 2 21 12.500t8 23.500z"] },
    { label: "齿轮组", d: ["M896 896q0-106-75-181t-181-75-181 75-75 181 75 181 181 75 181-75 75-181zm768 512q0-52-38-90t-90-38-90 38-38 90q0 53 37.500 90.500t90.500 37.500 90.500-37.500 37.500-90.500zm0-1024q0-52-38-90t-90-38-90 38-38 90q0 53 37.500 90.500t90.500 37.500 90.500-37.500 37.500-90.500zm-384 421v185q0 10-7 19.500t-16 10.500l-155 24q-11 35-32 76 34 48 90 115 7 11 7 20 0 12-7 19-23 30-82.500 89.500t-78.500 59.500q-11 0-21-7l-115-90q-37 19-77 31-11 108-23 155-7 24-30 24h-186q-11 0-20-7.500t-10-17.500l-23-153q-34-10-75-31l-118 89q-7 7-20 7-11 0-21-8-144-133-144-160 0-9 7-19 10-14 41-53t47-61q-23-44-35-82l-152-24q-10-1-17-9.500t-7-19.500v-185q0-10 7-19.500t16-10.500l155-24q11-35 32-76-34-48-90-115-7-11-7-20 0-12 7-20 22-30 82-89t79-59q11 0 21 7l115 90q34-18 77-32 11-108 23-154 7-24 30-24h186q11 0 20 7.500t10 17.500l23 153q34 10 75 31l118-89q8-7 20-7 11 0 21 8 144 133 144 160 0 8-7 19-12 16-42 54t-45 60q23 48 34 82l152 23q10 2 17 10.500t7 19.500zm640 533v140q0 16-149 31-12 27-30 52 51 113 51 138 0 4-4 7-122 71-124 71-8 0-46-47t-52-68q-20 2-30 2t-30-2q-14 21-52 68t-46 47q-2 0-124-71-4-3-4-7 0-25 51-138-18-25-30-52-149-15-149-31v-140q0-16 149-31 13-29 30-52-51-113-51-138 0-4 4-7 4-2 35-20t59-34 30-16q8 0 46 46.500t52 67.500q20-2 30-2t30 2q51-71 92-112l6-2q4 0 124 70 4 3 4 7 0 25-51 138 17 23 30 52 149 15 149 31zm0-1024v140q0 16-149 31-12 27-30 52 51 113 51 138 0 4-4 7-122 71-124 71-8 0-46-47t-52-68q-20 2-30 2t-30-2q-14 21-52 68t-46 47q-2 0-124-71-4-3-4-7 0-25 51-138-18-25-30-52-149-15-149-31v-140q0-16 149-31 13-29 30-52-51-113-51-138 0-4 4-7 4-2 35-20t59-34 30-16q8 0 46 46.500t52 67.500q20-2 30-2t30 2q51-71 92-112l6-2q4 0 124 70 4 3 4 7 0 25-51 138 17 23 30 52 149 15 149 31z"] },
    { label: "讨论", d: ["M1792 896q0 174-120 321.500t-326 233-450 85.500q-70 0-145-8-198 175-460 242-49 14-114 22-17 2-30.500-9t-17.500-29v-1q-3-4-.5-12t2-10 4.500-9.500l6-9 7-8.500 8-9q7-8 31-34.500t34.500-38 31-39.500 32.500-51 27-59 26-76q-157-89-247.500-220t-90.500-281q0-130 71-248.500t191-204.500 286-136.500 348-50.500q244 0 450 85.500t326 233 120 321.500z"] },
  ],
  [
    { label: "讨论-空", d: [commentO] },
    { label: "讨论中", d: [threeDots + "M1792 896q0 174-120 321.500t-326 233-450 85.500q-110 0-211-18-173 173-435 229-52 10-86 13-12 1-22-6t-13-18q-4-15 20-37 5-5 23.500-21.500t25.500-23.500 23.500-25.500 24-31.500 20.500-37 20-48 14.500-57.500 12.500-72.500q-146-90-229.500-216.500t-83.500-269.500q0-174 120-321.500t326-233 450-85.500 450 85.500 326 233 120 321.500z"], evenodd: true },
    { label: "讨论中-空", d: [commentO, threeDots] },
    { label: "讨论组", d: ["M1408 768q0 139-94 257t-256.500 186.500-353.500 68.500q-86 0-176-16-124 88-278 128-36 9-86 16h-3q-11 0-20.500-8t-11.500-21q-1-3-1-6.500t.5-6.500 2-6l2.500-5 3.500-5.500 4-5 4.500-5 4-4.500q5-6 23-25t26-29.500 22.500-29 25-38.500 20.500-44q-124-72-195-177t-71-224q0-139 94-257t256.500-186.500 353.500-68.500 353.500 68.500 256.500 186.500 94 257zm384 256q0 120-71 224.500t-195 176.500q10 24 20.500 44t25 38.500 22.500 29 26 29.500 23 25q1 1 4 4.500t4.500 5 4 5 3.500 5.500l2.500 5 2 6 .5 6.500-1 6.500q-3 14-13 22t-22 7q-50-7-86-16-154-40-278-128-90 16-176 16-271 0-472-132 58 4 88 4 161 0 309-45t264-129q125-92 192-212t67-254q0-77-23-152 129 71 204 178t75 230z"] },
    { label: "讨论组-空", d: ["M704 384q-153 0-286 52t-211.500 141-78.500 191q0 82 53 158t149 132l97 56-35 84q34-20 62-39l44-31 53 10q78 14 153 14 153 0 286-52t211.500-141 78.500-191-78.500-191-211.500-141-286-52zm0-128q191 0 353.500 68.500t256.500 186.500 94 257-94 257-256.500 186.500-353.500 68.500q-86 0-176-16-124 88-278 128-36 9-86 16h-3q-11 0-20.500-8t-11.500-21q-1-3-1-6.500t.5-6.500 2-6l2.500-5 3.500-5.500 4-5 4.500-5 4-4.500q5-6 23-25t26-29.500 22.500-29 25-38.500 20.500-44q-124-72-195-177t-71-224q0-139 94-257t256.500-186.500 353.500-68.500zm824 1048q10 24 20.500 44t25 38.500 22.500 29 26 29.500 23 25q1 1 4 4.500t4.500 5 4 5 3.500 5.500l2.500 5 2 6 .5 6.500-1 6.500q-3 14-13 22t-22 7q-50-7-86-16-154-40-278-128-90 16-176 16-271 0-472-132 58 4 88 4 161 0 309-45t264-129q125-92 192-212t67-254q0-77-23-152 129 71 204 178t75 230q0 120-71 224.500t-195 176.500z"] },
    { label: "指南针", d: ["M640 1088l256-128-256-128zM1024 497v542l-512 256v-542z", ringCut], evenodd: true },
    { label: "版权", d: ["M1150 1074v109q0 50-36.500 89t-94 60.500-118 32.500-117.500 11q-205 0-342.500-139t-137.500-346q0-203 136-339t339-136q34 0 75.500 4.500t93 18 92.500 34 69 56.500 28 81v109q0 16-16 16h-118q-16 0-16-16v-70q0-43-65.500-67.500t-137.500-24.500q-140 0-228.500 91.500t-88.500 237.500q0 151 91.500 249.500t233.500 98.500q68 0 138-24t70-66v-70q0-7 4.500-11.500t10.500-4.500h119q6 0 11 4.500t5 11.500zm-382-818q-130 0-248.500 51t-204 136.500-136.500 204-51 248.500 51 248.500 136.500 204 204 136.500 248.500 51 248.500-51 204-136.500 136.500-204 51-248.500-51-248.500-136.500-204-204-136.500-248.500-51zm768 640q0 209-103 385.500t-279.500 279.500-385.500 103-385.500-103-279.500-279.500-103-385.500 103-385.500 279.500-279.500 385.500-103 385.500 103 279.500 279.500 103 385.500z"] },
    { label: "知识共享", d: ["M605 1233q153 0 257-104 14-18 3-36l-45-82q-6-13-24-17-16-2-27 11l-4 3q-4 4-11.500 10t-17.500 13.500-23.500 14.500-28.500 13-33.500 9.500-37.500 3.500q-76 0-125-50t-49-127q0-76 48-125.500t122-49.500q37 0 71.500 14t50.500 28l16 14q11 11 26 10 16-2 24-14l53-78q13-20-2-39-3-4-11-12t-30-23.500-48.500-28-67.500-22.500-86-10q-148 0-246 96.500t-98 240.500q0 146 97 241.500t247 95.500zm630 0q153 0 257-104 14-18 4-36l-45-82q-8-14-25-17-16-2-27 11l-4 3q-4 4-11.500 10t-17.500 13.500-23.500 14.500-28.500 13-33.500 9.500-37.500 3.500q-76 0-125-50t-49-127q0-76 48-125.500t122-49.500q37 0 71.500 14t50.500 28l16 14q11 11 26 10 16-2 24-14l53-78q13-20-2-39-3-4-11-12t-30-23.500-48.500-28-67.500-22.500-86-10q-147 0-245.500 96.500t-98.500 240.500q0 146 97 241.500t247 95.500z", disc(896, 896, 768) + disc(896, 896, 640, false)] },
    { label: "信用卡", d: ["M1760 128q66 0 113 47t47 113v1216q0 66-47 113t-113 47h-1600q-66 0-113-47t-47-113v-1216q0-66 47-113t113-47h1600zm-1600 128q-13 0-22.500 9.500t-9.500 22.500v224h1664v-224q0-13-9.500-22.500t-22.500-9.500h-1600zm1600 1280q13 0 22.500-9.500t9.500-22.500v-608h-1664v608q0 13 9.500 22.500t22.500 9.500h1600zm-1504-128v-128h256v128h-256zm384 0v-128h384v128h-384z"] },
    { label: "信用卡-反色", d: ["M0 1504v-608h2304v608q0 66-47 113t-113 47h-1984q-66 0-113-47t-47-113zm640-224v128h384v-128h-384zm-384 0v128h256v-128h-256zm1888-1152q66 0 113 47t47 113v224h-2304v-224q0-66 47-113t113-47h1984z"] },
    { label: "裁剪", d: ["M621 1280h595v-595zm-45-45l595-595h-595v595zm1152 77v192q0 14-9 23t-23 9h-224v224q0 14-9 23t-23 9h-192q-14 0-23-9t-9-23v-224h-864q-14 0-23-9t-9-23v-864h-224q-14 0-23-9t-9-23v-192q0-14 9-23t23-9h224v-224q0-14 9-23t23-9h192q14 0 23 9t9 23v224h851l246-247q10-9 23-9t23 9q9 10 9 23t-9 23l-247 246v851h224q14 0 23 9t9 23z"] },
    { label: "准星", d: ["M1197 1024h-109q-26 0-45-19t-19-45v-128q0-26 19-45t45-19h109q-32-108-112.500-188.500t-188.500-112.500v109q0 26-19 45t-45 19h-128q-26 0-45-19t-19-45v-109q-108 32-188.500 112.500t-112.500 188.500h109q26 0 45 19t19 45v128q0 26-19 45t-45 19h-109q32 108 112.500 188.500t188.500 112.500v-109q0-26 19-45t45-19h128q26 0 45 19t19 45v109q108-32 188.500-112.500t112.500-188.500zm339-192v128q0 26-19 45t-45 19h-143q-37 161-154.500 278.500t-278.500 154.500v143q0 26-19 45t-45 19h-128q-26 0-45-19t-19-45v-143q-161-37-278.500-154.500t-154.500-278.500h-143q-26 0-45-19t-19-45v-128q0-26 19-45t45-19h143q37-161 154.500-278.500t278.500-154.500v-143q0-26 19-45t45-19h128q26 0 45 19t19 45v143q161 37 278.500 154.500t154.500 278.500h143q26 0 45 19t19 45z"] },
    { label: "立方体", d: ["M896 1629l640-349v-636l-640 233v752zm-64-865l698-254-698-254-698 254zm832-252v768q0 35-18 65t-49 47l-704 384q-28 16-61 16t-61-16l-704-384q-31-17-49-47t-18-65v-768q0-40 23-73t61-47l704-256q22-8 44-8t44 8l704 256q38 14 61 47t23 73z"] },
  ],
  [
    { label: "立方体组", d: ["M640 1632l384-192v-314l-384 164v342zm-64-454l404-173-404-173-404 173zm1088 454l384-192v-314l-384 164v342zm-64-454l404-173-404-173-404 173zm-448-293l384-165v-266l-384 164v267zm-64-379l441-189-441-189-441 189zm1088 518v416q0 36-19 67t-52 47l-448 224q-25 14-57 14t-57-14l-448-224q-4-2-7-4-2 2-7 4l-448 224q-25 14-57 14t-57-14l-448-224q-33-16-52-47t-19-67v-416q0-38 21.500-70t56.500-48l434-186v-400q0-38 21.500-70t56.500-48l448-192q23-10 50-10t50 10l448 192q35 16 56.500 48t21.500 70v400l434 186q36 16 57 48t21 70z"] },
    { label: "餐具", d: ["M640 64v640q0 61-35.500 111t-92.500 70v779q0 52-38 90t-90 38h-128q-52 0-90-38t-38-90v-779q-57-20-92.500-70t-35.500-111v-640q0-26 19-45t45-19 45 19 19 45v416q0 26 19 45t45 19 45-19 19-45v-416q0-26 19-45t45-19 45 19 19 45v416q0 26 19 45t45 19 45-19 19-45v-416q0-26 19-45t45-19 45 19 19 45zm768 0v1600q0 52-38 90t-90 38h-128q-52 0-90-38t-38-90v-512h-224q-13 0-22.500-9.500t-9.500-22.500v-800q0-132 94-226t226-94h256q26 0 45 19t19 45z"] },
    { label: "仪表盘", d: ["M384 1152q0-53-37.500-90.500t-90.500-37.500-90.500 37.500-37.500 90.500 37.500 90.500 90.500 37.500 90.500-37.500 37.500-90.500zm192-448q0-53-37.500-90.500t-90.500-37.500-90.500 37.500-37.500 90.500 37.500 90.500 90.500 37.500 90.500-37.500 37.500-90.500zm428 481l101-382q6-26-7.500-48.500t-38.500-29.500-48 6.500-30 39.500l-101 382q-60 5-107 43.500t-63 98.500q-20 77 20 146t117 89 146-20 89-117q16-60-6-117t-72-91zm660-33q0-53-37.500-90.500t-90.500-37.500-90.500 37.500-37.500 90.500 37.500 90.500 90.500 37.500 90.500-37.500 37.500-90.500zm-640-640q0-53-37.500-90.500t-90.500-37.500-90.500 37.500-37.500 90.500 37.500 90.500 90.500 37.500 90.500-37.500 37.500-90.500zm448 192q0-53-37.500-90.500t-90.500-37.500-90.500 37.500-37.500 90.500 37.500 90.500 90.500 37.500 90.500-37.500 37.500-90.500zm320 448q0 261-141 483-19 29-54 29h-1402q-35 0-54-29-141-221-141-483 0-182 71-348t191-286 286-191 348-71 348 71 286 191 191 286 71 348z"] },
    { label: "数据库", d: ["M896 768q237 0 443-43t325-127v170q0 69-103 128t-280 93.500-385 34.500-385-34.500-280-93.500-103-128v-170q119 84 325 127t443 43zm0 768q237 0 443-43t325-127v170q0 69-103 128t-280 93.500-385 34.500-385-34.500-280-93.500-103-128v-170q119 84 325 127t443 43zm0-384q237 0 443-43t325-127v170q0 69-103 128t-280 93.500-385 34.500-385-34.500-280-93.500-103-128v-170q119 84 325 127t443 43zm0-1152q208 0 385 34.500t280 93.500 103 128v128q0 69-103 128t-280 93.500-385 34.500-385-34.500-280-93.500-103-128v-128q0-69 103-128t280-93.500 385-34.500z"] },
    { label: "聋人", Comp: FaDeaf },
    { label: "耳聋", Comp: FaDeaf },
    { label: "桌面", d: ["M1728 992v-832q0-13-9.500-22.500t-22.500-9.500h-1600q-13 0-22.500 9.500t-9.500 22.500v832q0 13 9.500 22.500t22.500 9.500h1600q13 0 22.500-9.500t9.500-22.500zm128-832v1088q0 66-47 113t-113 47h-544q0 37 16 77.500t32 71 16 43.500q0 26-19 45t-45 19h-512q-26 0-45-19t-19-45q0-14 16-44t32-70 16-78h-544q-66 0-113-47t-47-113v-1088q0-66 47-113t113-47h1632q66 0 113 47t47 113z"] },
    { label: "菱形", d: ["M212 768l623 665-300-665h-323zm812 772l349-772h-698zm-486-900l204-384h-262l-288 384h346zm675 793l623-665h-323zm-530-793h682l-204-384h-274zm827 0h346l-288-384h-262zm141-486l384 512q14 18 13 41.500t-17 40.500l-960 1024q-18 20-47 20t-47-20l-960-1024q-16-17-17-40.500t13-41.500l384-512q18-26 51-26h1152q33 0 51 26z"] },
    { label: "点圆-空", d: ["M1152 896q0 106-75 181t-181 75-181-75-75-181 75-181 181-75 181 75 75 181zm-256-544q-148 0-273 73t-198 198-73 273 73 273 198 198 273 73 273-73 198-198 73-273-73-273-198-198-273-73zm768 544q0 209-103 385.500t-279.500 279.500-385.500 103-385.500-103-279.500-279.500-103-385.500 103-385.500 279.500-279.500 385.500-103 385.500 103 279.500 279.500 103 385.500z"] },
    { label: "下载", d: ["M1344 1344q0-26-19-45t-45-19-45 19-19 45 19 45 45 19 45-19 19-45zm256 0q0-26-19-45t-45-19-45 19-19 45 19 45 45 19 45-19 19-45zm128-224v320q0 40-28 68t-68 28h-1472q-40 0-68-28t-28-68v-320q0-40 28-68t68-28h465l135 136q58 56 136 56t136-56l136-136h464q40 0 68 28t28 68zm-325-569q17 41-14 70l-448 448q-18 19-45 19t-45-19l-448-448q-31-29-14-70 17-39 59-39h256v-448q0-26 19-45t45-19h256q26 0 45 19t19 45v448h256q42 0 59 39z"] },
    { label: "驾驶证", fixed: idCardSolid },
    { label: "驾驶证-空", fixed: idCardLine },
    { label: "编辑", d: ["M888 1184l116-116-152-152-116 116v56h96v96h56zm440-720q-16-16-33 1l-350 350q-17 17-1 33t33-1l350-350q17-17 1-33zm80 594v190q0 119-84.500 203.500t-203.500 84.500h-832q-119 0-203.500-84.500t-84.500-203.500v-832q0-119 84.500-203.500t203.500-84.500h832q63 0 117 25 15 7 18 23 3 17-9 29l-49 49q-14 14-32 8-23-6-45-6h-832q-66 0-113 47t-47 113v832q0 66 47 113t113 47h832q66 0 113-47t47-113v-126q0-13 9-22l64-64q15-15 35-7t20 29zm-96-738l288 288-672 672h-288v-288zm444 132l-92 92-288-288 92-92q28-28 68-28t68 28l152 152q28 28 28 68t-28 68z"] },
  ],
];

function Glyph({ item }) {
  const ref = useRef(null);
  useLayoutEffect(() => {
    if (item.fixed) return;
    const svg = ref.current.querySelector("svg");
    const b = svg.getBBox();
    svg.setAttribute("viewBox", `${b.x} ${b.y} ${b.width} ${b.height}`);
  }, [item]);

  let content;
  if (item.fixed) {
    content = <svg viewBox="0 0 35 35">{item.fixed}</svg>;
  } else if (item.Comp) {
    const C = item.Comp;
    content = <C />;
  } else if (item.caret !== undefined) {
    content = (
      <svg viewBox="0 0 1536 1536">
        <path d={caretFrame} />
        <path d={caretTri} transform={`rotate(${item.caret} 768 768)`} />
      </svg>
    );
  } else {
    content = (
      <svg viewBox="0 0 1792 1792" fillRule={item.evenodd ? "evenodd" : "nonzero"}>
        {path(...item.d)}
      </svg>
    );
  }
  return <IconBox ref={ref}>{content}</IconBox>;
}

export default function App() {
  return (
    <Page>
      <Global />
      <TitleBar>
        <BackIcon viewBox="0 0 10 10"><path d="M0 0h7l-2.200 2.200 4.700 4.700-2.600 2.600-4.700-4.700-2.200 2.200z" /></BackIcon>
        <Title>元件库</Title>
        <ToolIcon viewBox="128 256 1536 1280" preserveAspectRatio="none">
          <path d="M1664 1344v128q0 26-19 45t-45 19h-1408q-26 0-45-19t-19-45v-128q0-26 19-45t45-19h1408q26 0 45 19t19 45zm0-512v128q0 26-19 45t-45 19h-1408q-26 0-45-19t-19-45v-128q0-26 19-45t45-19h1408q26 0 45 19t19 45zm0-512v128q0 26-19 45t-45 19h-1408q-26 0-45-19t-19-45v-128q0-26 19-45t45-19h1408q26 0 45 19t19 45z" />
        </ToolIcon>
        <ToolIcon viewBox="64 128 1664 1664" preserveAspectRatio="none">
          <path d="M1216 832q0-185-131.500-316.500t-316.500-131.500-316.500 131.500-131.500 316.500 131.500 316.500 316.500 131.500 316.500-131.500 131.500-316.500zm512 832q0 52-38 90t-90 38q-54 0-90-38l-343-342q-179 124-399 124-143 0-273.500-55.500t-225-150-150-225-55.500-273.500 55.500-273.500 150-225 225-150 273.500-55.500 273.500 55.500 225 150 150 225 55.500 273.500q0 220-124 399l343 343q37 37 37 90z" />
        </ToolIcon>
      </TitleBar>
      <SelectBar>
        <span>Icons</span>
        <Caret />
      </SelectBar>
      <Main>
        <Scroller>
          <Grid>
            {ROWS.flat().map(item => (
              <Cell key={item.label} $selected={item.selected}>
                <Glyph item={item} />
                <Label>{item.label}</Label>
                {item.selected && <Hint>?</Hint>}
              </Cell>
            ))}
          </Grid>
        </Scroller>
        <ScrollTrack>
          <ArrowUp />
          <Thumb><Grip /><Grip /><Grip /></Thumb>
          <ArrowDown />
        </ScrollTrack>
      </Main>
      <Footer />
    </Page>
  );
}
